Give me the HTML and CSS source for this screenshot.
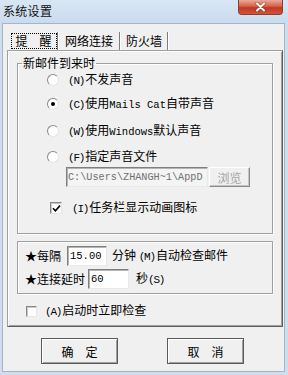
FILE: index.html
```html
<!DOCTYPE html>
<html lang="zh-CN">
<head>
  <meta charset="UTF-8" />
  <title>系统设置</title>
  <meta name="viewport" content="width=device-width, initial-scale=1.0" />
  <link rel="stylesheet" href="styles.css">
</head>
<body>
  <div class="window">
    <div class="titlebar">
      <span class="title">系统设置</span>
      <button class="close" aria-label="关闭">
        <svg width="11" height="10" viewBox="0 0 11 10">
          <path d="M2 1.5 L9 8.5 M9 1.5 L2 8.5" stroke="#5a2018" stroke-width="3.2" stroke-linecap="round" opacity="0.45" />
          <path d="M2 1.5 L9 8.5 M9 1.5 L2 8.5" stroke="#fff" stroke-width="2" stroke-linecap="round" />
        </svg>
      </button>
    </div>

    <div class="client">
      <div class="tabs">
        <div class="tab tab-1 active"><span class="tab-label">提　醒</span></div>
        <div class="tab tab-2">网络连接</div>
        <div class="tab tab-3">防火墙</div>
      </div>

      <div class="panel">
        <fieldset class="group">
          <legend>新邮件到来时</legend>
          <div class="group-body">
            <div class="row">
              <span class="radio"></span>
              <span class="text"><span class="lat key">(N)</span>不发声音</span>
            </div>
            <div class="row row-2">
              <span class="radio on"></span>
              <span class="text"><span class="lat key">(C)</span>使用<span class="lat">Mails Cat</span>自带声音</span>
            </div>
            <div class="row row-3">
              <span class="radio"></span>
              <span class="text"><span class="lat key">(W)</span>使用<span class="lat">Windows</span>默认声音</span>
            </div>
            <div class="row row-4">
              <span class="radio"></span>
              <span class="text"><span class="lat key">(F)</span>指定声音文件</span>
            </div>
            <div class="file-row">
              <input class="field path" type="text" value="C:\Users\ZHANGH~1\AppD" disabled>
              <button class="browse" disabled>浏览</button>
            </div>
            <div class="row check-row">
              <span class="check on">
                <svg width="9" height="9" viewBox="0 0 9 9">
                  <path d="M1 4.2 L3.4 6.8 L8 1.6" fill="none" stroke="#000" stroke-width="1.6" />
                </svg>
              </span>
              <span class="text"><span class="lat key">(I)</span>任务栏显示动画图标</span>
            </div>
          </div>
        </fieldset>

        <div class="group plain">
          <div class="line">
            <span>★每隔</span>
            <input class="field every" type="text" value="15.00">
            <span class="after-every">分钟 <span class="lat key">(M)</span>自动检查邮件</span>
          </div>
          <div class="line line-2">
            <span>★连接延时</span>
            <input class="field delay" type="text" value="60">
            <span class="after-delay">秒<span class="lat key">(S)</span></span>
          </div>
        </div>

        <div class="row start-row">
          <span class="check"></span>
          <span class="text"><span class="lat key">(A)</span>启动时立即检查</span>
        </div>
      </div>

      <div class="buttons">
        <button class="btn">确　定</button>
        <button class="btn">取　消</button>
      </div>
    </div>
  </div>
</body>
</html>
```

FILE: styles.css
```css
body {
  margin: 0;
  width: 288px;
  height: 375px;
  overflow: hidden;
  background: #cfdeef;
  font-family: "Noto Sans CJK SC", "Liberation Sans", sans-serif;
  font-size: 12px;
  color: #000;
}

.window {
  display: flex;
  flex-direction: column;
  height: 375px;
}

/* title bar */
.titlebar {
  flex: none;
  height: 23px;
  display: flex;
  align-items: flex-start;
  background: linear-gradient(#d9e6f4, #cadbee);
}

.title {
  margin: 3px 0 0 3px;
  line-height: 16px;
  letter-spacing: 0.3px;
  color: #111;
}

.close {
  margin-left: auto;
  margin-right: 5px;
  width: 45px;
  height: 15px;
  padding: 0;
  border: 1px solid #8c3d31;
  border-top: 0;
  border-radius: 0 0 4px 4px;
  background: linear-gradient(#eaa99b, #d4604b 45%, #c0381f 55%, #d0543c);
  display: flex;
  align-items: center;
  justify-content: center;
}

/* client area */
.client {
  flex: 1;
  margin: 0 3px 3px 2px;
  border: 1px solid #a3b5c9;
  background: #f0f0f0;
  display: flex;
  flex-direction: column;
}

.tabs {
  flex: none;
  display: flex;
  height: 19px;
  margin: 7px 0 0 7px;
}

.tab {
  display: flex;
  align-items: center;
  justify-content: center;
  height: 18px;
  margin-top: 1px;
  border-right: 1px solid #7d7d7d;
  box-shadow: 1px 0 0 #fff;
  line-height: 16px;
}

.tab-1 { width: 47px; }
.tab-2 { width: 60px; margin-left: 1px; }
.tab-3 { width: 46px; margin-left: 1px; }

.tab-label {
  display: block;
  width: 46px;
  height: 16px;
  box-sizing: border-box;
  outline: 1px dotted #000;
  outline-offset: -1px;
  text-align: center;
}

.panel {
  flex: none;
  box-sizing: border-box;
  width: 276px;
  height: 277px;
  margin-left: 4px;
  border: 1px solid;
  border-color: #a0a0a0 #5f5f5f #5f5f5f #a0a0a0;
  box-shadow: inset 1px 1px 0 #fff, inset -1px -1px 0 #a0a0a0;
  display: flex;
  flex-direction: column;
}

/* group boxes */
.group {
  box-sizing: border-box;
  width: 256px;
  margin: 5px 0 0 9px;
  padding: 0;
  min-width: 0;
  border: 1px solid #a0a0a0;
  box-shadow: inset 1px 1px 0 #fff, 1px 1px 0 #fff;
}

.group legend {
  margin-left: 4px;
  padding: 0 1px;
  line-height: 14px;
}

.group-body {
  padding: 1px 0 16px 29px;
  display: flex;
  flex-direction: column;
}

.row {
  display: flex;
  align-items: center;
  height: 18px;
}

.row-2 { margin-top: 6px; }
.row-3 { margin-top: 9px; }
.row-4 { margin-top: 8px; }

.text {
  margin-left: 9px;
  line-height: 16px;
  white-space: nowrap;
}

.lat {
  font-family: "Liberation Mono", monospace;
  font-size: 10.5px;
}

.key {
  font-size: 11px;
  letter-spacing: -1.2px;
  margin-right: 1px;
}

.radio {
  flex: none;
  box-sizing: border-box;
  width: 12px;
  height: 12px;
  border-radius: 50%;
  border: 1px solid;
  border-color: #8a8a8a #e4e4e4 #e4e4e4 #8a8a8a;
  background: #fff;
  display: flex;
  align-items: center;
  justify-content: center;
}

.radio.on::after {
  content: "";
  width: 4px;
  height: 4px;
  border-radius: 50%;
  background: #000;
}

.check {
  flex: none;
  box-sizing: border-box;
  width: 12px;
  height: 12px;
  border: 1px solid;
  border-color: #8a8a8a #e6e6e6 #e6e6e6 #8a8a8a;
  box-shadow: inset 1px 1px 0 #c8c8c8;
  background: #fff;
  display: flex;
  align-items: center;
  justify-content: center;
}

.check-row {
  margin-top: 12px;
  padding-left: 3px;
}

.check-row .text { margin-left: 10px; }

.file-row {
  display: flex;
  margin: 1px 0 0 19px;
  height: 20px;
}

.field {
  box-sizing: border-box;
  height: 20px;
  margin: 0;
  padding: 0 2px;
  border: 1px solid;
  border-color: #7f7f7f #e8e8e8 #e8e8e8 #7f7f7f;
  box-shadow: inset 1px 1px 0 #b4b4b4;
  background: #fff;
  font-family: "Liberation Mono", monospace;
  font-size: 10.5px;
  color: #000;
  outline: none;
}

.path {
  width: 142px;
  background: #f4f4f4;
  color: #6f6f6f;
  padding: 0 0 0 1px;
  font-size: 10.2px;
}

.browse {
  box-sizing: border-box;
  width: 41px;
  height: 20px;
  margin-left: 1px;
  padding: 0;
  border: 1px solid;
  border-color: #fff #8a8a8a #8a8a8a #fff;
  box-shadow: inset -1px -1px 0 #c4c4c4;
  background: #f0f0f0;
  font-family: "Noto Sans CJK SC", sans-serif;
  font-size: 12px;
  color: #a3a3a3;
}

.plain {
  margin-top: 7px;
  padding: 4px 0 4px 7px;
  display: flex;
  flex-direction: column;
}

.line {
  display: flex;
  align-items: center;
  height: 20px;
  white-space: nowrap;
  line-height: 16px;
}

.line-2 { margin-top: 3px; }

.every { width: 40px; margin-left: 6px; }
.after-every { margin-left: 5px; }
.delay { width: 41px; margin-left: 3px; }
.after-delay { margin-left: 7px; }

.start-row {
  margin: 8px 0 0 18px;
}

.start-row .check {
  width: 11px;
  height: 11px;
}

.start-row .text { margin-left: 8px; }

/* dialog buttons */
.buttons {
  flex: none;
  display: flex;
  gap: 49px;
  margin: 11px 0 0 38px;
}

.btn {
  box-sizing: border-box;
  width: 77px;
  height: 26px;
  padding: 0;
  border: 1px solid #5a5a5a;
  box-shadow: inset 1px 1px 0 #fff, inset -1px -1px 0 #a0a0a0;
  background: #f0f0f0;
  font-family: "Noto Sans CJK SC", sans-serif;
  font-size: 12px;
  color: #000;
}
```
